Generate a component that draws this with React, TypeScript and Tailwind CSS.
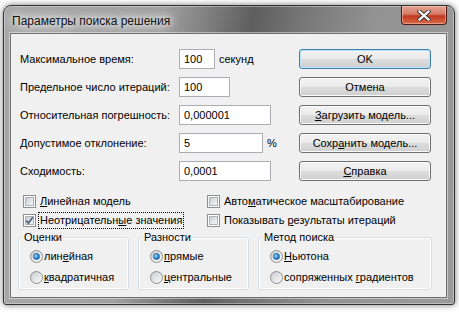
import type { ReactNode } from "react";

const font = "font-['Liberation_Sans',Arial,sans-serif]";

function CheckBox({ checked }: { checked?: boolean }) {
  return (
    <span className="relative flex h-[13px] w-[13px] shrink-0 items-center justify-center border border-[#8e8f8f] bg-white">
      <span className="h-[9px] w-[9px] border border-[#aeb3b9] bg-[linear-gradient(135deg,#cdd1d6,#f4f4f4)]" />
      {checked ? (
        <svg className="absolute left-[1px] top-[1px]" width="9" height="9" viewBox="0 0 9 9">
          <path d="M1.3 4.6 L3.4 7.2 L7.8 1.2" fill="none" stroke="#4a5e86" strokeWidth="1.7" />
        </svg>
      ) : null}
    </span>
  );
}

function Radio({ checked }: { checked?: boolean }) {
  return (
    <span className="flex h-[13px] w-[13px] shrink-0 items-center justify-center rounded-full border border-[#8e8f8f] bg-[linear-gradient(135deg,#c9cdd2,#fbfbfb)]">
      {checked ? (
        <span className="h-[7px] w-[7px] rounded-full border border-[#1d5f93] bg-[radial-gradient(circle_at_35%_35%,#a8ddff,#2b8ad6_55%,#0c4f8a)]" />
      ) : null}
    </span>
  );
}

/** Кнопка в стиле Windows 7 */
function Button({ children, primary }: { children: ReactNode; primary?: boolean }) {
  const border = primary
    ? "border-[#3c7fb1] shadow-[inset_0_0_0_1px_#b6e3f8]"
    : "border-[#707070] shadow-[inset_0_0_0_1px_#fbfbfb]";
  return (
    <div
      className={`flex h-[20px] w-[132px] items-center justify-center rounded-[3px] border ${border} bg-[linear-gradient(#f2f2f2_0%,#ebebeb_50%,#dddddd_50%,#cfcfcf_100%)] text-[11px] text-black`}
    >
      {children}
    </div>
  );
}

function Field({ label, value, width, suffix }: { label: string; value: string; width: string; suffix?: string }) {
  return (
    <div className="flex h-[20px] items-center">
      <span className="w-[159px] shrink-0">{label}</span>
      <input
        readOnly
        value={value}
        className={`h-[20px] ${width} border border-[#abadb3] bg-white px-[4px] text-[11px] text-black outline-none`}
      />
      {suffix ? <span className="ml-[4px]">{suffix}</span> : null}
    </div>
  );
}

function CheckRow({ checked, focused, children }: { checked?: boolean; focused?: boolean; children: ReactNode }) {
  return (
    <div className="flex h-[19px] items-center">
      <CheckBox checked={checked} />
      <span
        className={`ml-[2px] border px-[1px] leading-[15px] ${focused ? "border-dotted border-black" : "border-transparent"}`}
      >
        {children}
      </span>
    </div>
  );
}

function Group({ title, width, items }: { title: string; width: string; items: { label: ReactNode; checked?: boolean }[] }) {
  return (
    <fieldset className={`${width} rounded-[3px] border border-[#d5dfe5] pt-[2px] pb-[1px] shadow-[inset_0_0_0_1px_#ffffff]`}>
      <legend className="ml-[4px] px-[1px] leading-[13px]">{title}</legend>
      {items.map((it, i) => (
        <div key={i} className="flex h-[21px] items-center pl-[11px]">
          <Radio checked={it.checked} />
          <span className="ml-[1px]">{it.label}</span>
        </div>
      ))}
    </fieldset>
  );
}

export default function App() {
  return (
    <div className={`h-[312px] w-[459px] overflow-hidden bg-white pl-[3px] pt-[5px] ${font}`}>
      <div className="flex h-[300px] w-[452px] flex-col rounded-t-[8px] rounded-b-[3px] border border-[#333] bg-[linear-gradient(100deg,#a8a8a8_0%,#a0a0a0_32%,#5e5e5e_50%,#777_60%,#929292_74%,#9b9b9b_100%)] shadow-[0_0_6px_rgba(0,0,0,0.55),inset_0_0_0_1px_rgba(255,255,255,0.35)]">
        {/* заголовок окна */}
        <div className="flex h-[27px] shrink-0 items-start">
          <span className="pl-[8px] pt-[8px] text-[12px] leading-[14px] text-[#111] [text-shadow:0_0_6px_#fff,0_0_10px_#fff,0_0_14px_#fff]">
            Параметры поиска решения
          </span>
          <div className="ml-auto mr-[7px] flex h-[19px] w-[46px] items-center justify-center rounded-b-[4px] border border-t-0 border-[#4a1e16] bg-[linear-gradient(#e8a493_0%,#d47c66_45%,#c2391f_55%,#d96a48_100%)] shadow-[inset_0_0_0_1px_rgba(255,220,210,0.45)]">
            <svg width="14" height="11" viewBox="0 0 14 11">
              <path d="M2.5 1.5 L11.5 9.5 M11.5 1.5 L2.5 9.5" stroke="#3b3b3b" strokeWidth="4.2" strokeLinecap="square" />
              <path d="M2.5 1.5 L11.5 9.5 M11.5 1.5 L2.5 9.5" stroke="#fff" strokeWidth="2.2" strokeLinecap="square" />
            </svg>
          </div>
        </div>

        {/* клиентская область */}
        <div className="ml-[6px] mr-[7px] h-[265px] border border-[#6f6f6f] bg-[#f0f0f0] text-[11px] text-black shadow-[0_0_0_1px_rgba(255,255,255,0.45)]">
          <div className="flex pt-[15px]">
            <div className="flex w-[288px] flex-col gap-[8px] pl-[9px]">
              <Field label="Максимальное время:" value="100" width="w-[36px]" suffix="секунд" />
              <Field label="Предельное число итераций:" value="100" width="w-[51px]" />
              <Field label="Относительная погрешность:" value="0,000001" width="w-[92px]" />
              <Field label="Допустимое отклонение:" value="5" width="w-[84px]" suffix="%" />
              <Field label="Сходимость:" value="0,0001" width="w-[92px]" />
            </div>
            <div className="flex flex-col gap-[8px]">
              <Button primary>OK</Button>
              <Button>Отмена</Button>
              <Button>
                <span>
                  <u className="underline-offset-[1px]">З</u>агрузить модель...
                </span>
              </Button>
              <Button>
                <span>
                  Сохр<u className="underline-offset-[1px]">а</u>нить модель...
                </span>
              </Button>
              <Button>
                <span>
                  <u className="underline-offset-[1px]">С</u>правка
                </span>
              </Button>
            </div>
          </div>

          <div className="mt-[11px] grid grid-cols-[184px_1fr] pl-[12px]">
            <div className="flex flex-col">
              <CheckRow>
                <u>Л</u>инейная модель
              </CheckRow>
              <CheckRow checked focused>
                Неотрицательн<u>ы</u>е значения
              </CheckRow>
            </div>
            <div className="flex flex-col">
              <CheckRow>
                Авто<u>м</u>атическое масштабирование
              </CheckRow>
              <CheckRow>
                Показывать <u>р</u>езультаты итераций
              </CheckRow>
            </div>
          </div>

          <div className="mt-[1px] flex gap-[9px] pl-[7px]">
            <Group
              title="Оценки"
              width="w-[111px]"
              items={[
                { label: <>лин<u>е</u>йная</>, checked: true },
                { label: <><u>к</u>вадратичная</> },
              ]}
            />
            <Group
              title="Разности"
              width="w-[111px]"
              items={[
                { label: <><u>п</u>рямые</>, checked: true },
                { label: <><u>ц</u>ентральные</> },
              ]}
            />
            <Group
              title="Метод поиска"
              width="w-[174px]"
              items={[
                { label: <><u>Н</u>ьютона</>, checked: true },
                { label: <>сопряженных <u>г</u>радиентов</> },
              ]}
            />
          </div>
        </div>
      </div>
    </div>
  );
}
